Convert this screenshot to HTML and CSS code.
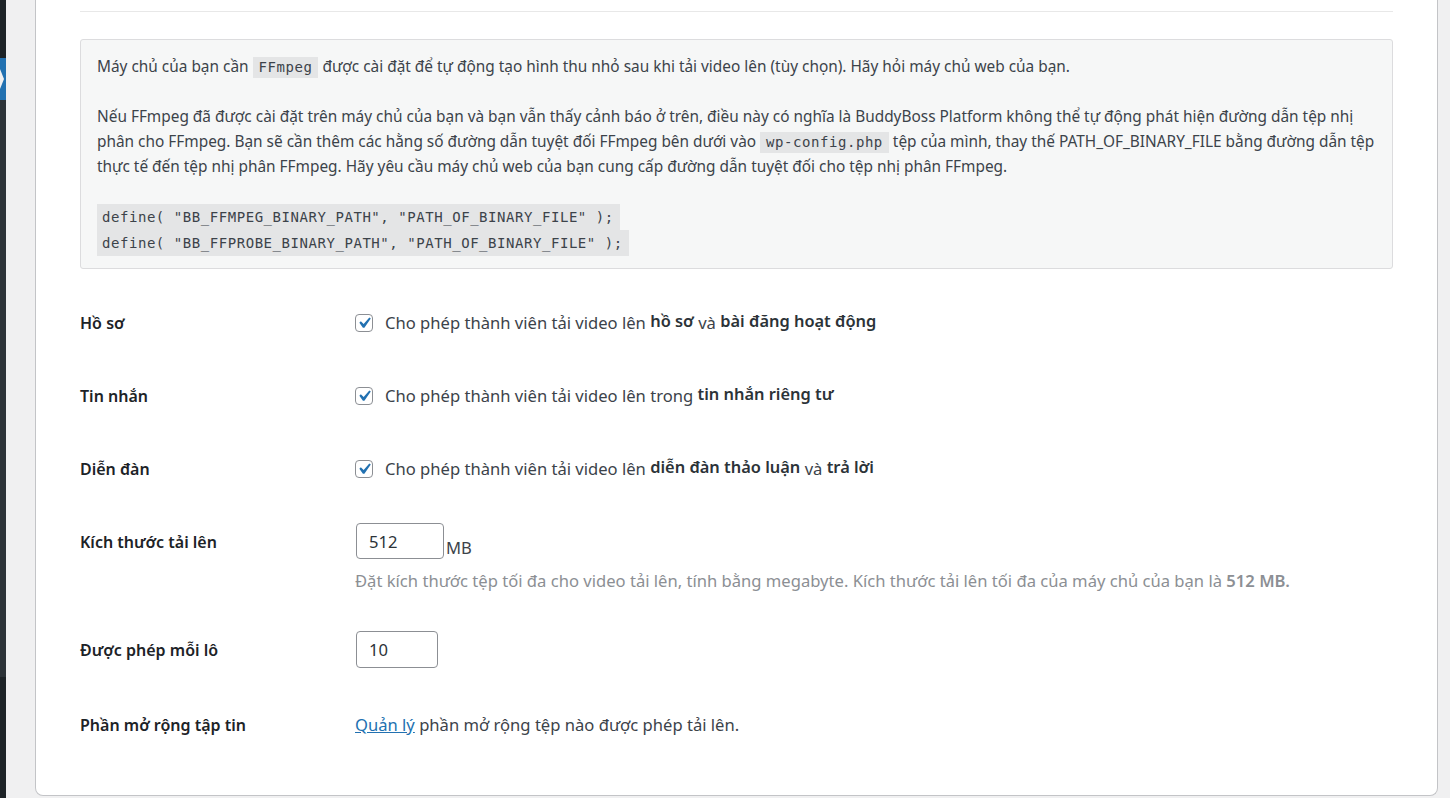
FILE: index.html
```html
<!DOCTYPE html>
<html lang="vi">
<head>
    <meta charset="utf-8">
    <title>Cài đặt video</title>
    <link rel="stylesheet" href="styles.css">
</head>
<body>
<div class="adminmenu">
    <div class="menu-top"></div>
    <div class="menu-current"><span class="notch"></span></div>
    <div class="menu-sub"></div>
    <div class="menu-bottom"></div>
</div>

<div class="wpbody">
  <div class="card">
    <hr class="sep">

    <!-- thông báo ffmpeg -->
    <div class="notice">
        <p>Máy chủ của bạn cần <code>FFmpeg</code> được cài đặt để tự động tạo hình thu nhỏ sau khi tải video lên (tùy chọn). Hãy hỏi máy chủ web của bạn.</p>
        <p>Nếu FFmpeg đã được cài đặt trên máy chủ của bạn và bạn vẫn thấy cảnh báo ở trên, điều này có nghĩa là BuddyBoss Platform không thể tự động phát hiện đường dẫn tệp nhị phân cho FFmpeg. Bạn sẽ cần thêm các hằng số đường dẫn tuyệt đối FFmpeg bên dưới vào <code>wp-config.php</code> tệp của mình, thay thế PATH_OF_BINARY_FILE bằng đường dẫn tệp thực tế đến tệp nhị phân FFmpeg. Hãy yêu cầu máy chủ web của bạn cung cấp đường dẫn tuyệt đối cho tệp nhị phân FFmpeg.</p>
        <p class="defines"><code>define( "BB_FFMPEG_BINARY_PATH", "PATH_OF_BINARY_FILE" );</code><br><code>define( "BB_FFPROBE_BINARY_PATH", "PATH_OF_BINARY_FILE" );</code></p>
    </div>

    <!-- các tùy chọn -->
    <div class="form-table">
        <div class="row">
            <div class="label">Hồ sơ</div>
            <div class="field check">
                <span class="checkbox"><svg viewBox="0 0 20 20"><path d="M14.83 4.89l1.34.94-5.81 8.38H9.02L5.78 9.67l1.34-1.25 2.57 2.4z" fill="#2271b1"/></svg></span>Cho phép thành viên tải video lên <strong>hồ sơ</strong> và <strong>bài đăng hoạt động</strong>
            </div>
        </div>
        <div class="row">
            <div class="label">Tin nhắn</div>
            <div class="field check">
                <span class="checkbox"><svg viewBox="0 0 20 20"><path d="M14.83 4.89l1.34.94-5.81 8.38H9.02L5.78 9.67l1.34-1.25 2.57 2.4z" fill="#2271b1"/></svg></span>Cho phép thành viên tải video lên trong <strong>tin nhắn riêng tư</strong>
            </div>
        </div>
        <div class="row">
            <div class="label">Diễn đàn</div>
            <div class="field check">
                <span class="checkbox"><svg viewBox="0 0 20 20"><path d="M14.83 4.89l1.34.94-5.81 8.38H9.02L5.78 9.67l1.34-1.25 2.57 2.4z" fill="#2271b1"/></svg></span>Cho phép thành viên tải video lên <strong>diễn đàn thảo luận</strong> và <strong>trả lời</strong>
            </div>
        </div>
        <div class="row">
            <div class="label">Kích thước tải lên</div>
            <div class="field">
                <div class="size-line"><input type="text" class="num wide" value="512"><span class="unit">MB</span></div>
                <p class="description">Đặt kích thước tệp tối đa cho video tải lên, tính bằng megabyte. Kích thước tải lên tối đa của máy chủ của bạn là <strong>512 MB.</strong></p>
            </div>
        </div>
        <div class="row">
            <div class="label">Được phép mỗi lô</div>
            <div class="field">
                <input type="text" class="num" value="10">
            </div>
        </div>
        <div class="row">
            <div class="label">Phần mở rộng tập tin</div>
            <div class="field text">
                <a href="#">Quản lý</a> phần mở rộng tệp nào được phép tải lên.
            </div>
        </div>
    </div>
  </div>
</div>
</body>
</html>
```

FILE: styles.css
```css
html, body {
    margin: 0;
    height: 100%;
}
body {
    display: flex;
    background: #f0f0f1;
    font-family: "Noto Sans", "Open Sans", sans-serif;
    color: #3c434a;
    overflow: hidden;
}

/* thanh menu bên trái */
.adminmenu {
    width: 6px;
    display: flex;
    flex-direction: column;
    flex-shrink: 0;
}
.menu-top { height: 58px; background: #1d2327; }
.menu-current {
    height: 42px;
    background: #2271b1;
    display: flex;
    align-items: center;
}
.notch {
    width: 0;
    height: 0;
    border-top: 10px solid transparent;
    border-bottom: 10px solid transparent;
    border-left: 4px solid #f0f0f1;
}
.menu-sub { height: 577px; background: #2c3338; }
.menu-bottom { flex: 1; background: #1d2327; }

/* vùng nội dung */
.wpbody {
    flex: 1;
    padding: 0 12px 2px 29px;
    display: flex;
}
.card {
    flex: 1;
    background: #fff;
    border: 1px solid #c3c4c7;
    border-top: none;
    border-radius: 0 0 8px 8px;
    padding: 0 44px;
}
.sep {
    border: none;
    border-top: 1px solid #e8e8e8;
    margin: 11px 0 0;
}

/* thông báo */
.notice {
    margin-top: 27px;
    background: #f6f7f7;
    border: 1px solid #dcdcde;
    border-radius: 3px;
    padding: 14px 16px 12px;
    font-size: 15.4px;
    line-height: 25px;
}
.notice p {
    margin: 0 0 25px;
}
.notice p.defines {
    margin: 0;
    line-height: 26px;
}
.notice code {
    font-family: "DejaVu Sans Mono", monospace;
    font-size: 14px;
    line-height: 18px;
    letter-spacing: 0.55px;
    background: #e4e5e6;
    color: #3c434a;
    padding: 2px 6px 3px;
}
.defines code {
    padding: 5px 6px 5px 5px;
}

/* bảng tùy chọn */
.form-table {
    margin-top: 24px;
}
.row {
    display: grid;
    grid-template-columns: 275px 1fr;
    padding: 11px 0 27px;
}
.label {
    padding-top: 7px;
    font-weight: 600;
    font-size: 16px;
    line-height: 24px;
    color: #1d2327;
}
.field {
    font-size: 16.6px;
    line-height: 24px;
}
.field.check {
    padding: 7px 0 4px;
    white-space: nowrap;
}
.field.text {
    padding-top: 7px;
}
.field strong {
    font-weight: 600;
    font-size: 16.4px;
    color: #2c3338;
    position: relative;
    top: -2px;
}
.checkbox {
    display: inline-block;
    vertical-align: -3px;
    width: 18px;
    height: 18px;
    box-sizing: border-box;
    border: 1px solid #8c8f94;
    border-radius: 4px;
    background: #fff;
    margin: 0 12px 0 0;
    position: relative;
}
.checkbox svg {
    position: absolute;
    left: -3px;
    top: -3px;
    width: 22px;
    height: 22px;
}
.size-line {
    display: flex;
    align-items: flex-end;
}
.num {
    box-sizing: border-box;
    width: 82px;
    height: 37px;
    margin: 0 0 0 1px;
    border: 1px solid #8c8f94;
    border-radius: 4px;
    padding: 0 12px;
    font-family: inherit;
    font-size: 16.6px;
    color: #2c3338;
    background: #fff;
}
.num.wide {
    width: 88px;
    height: 36px;
}
.unit {
    padding-left: 2px;
    line-height: 22px;
}
.description {
    margin: 10px 0 0;
    color: #8c8f94;
}
.description strong {
    top: 0;
    font-size: 16.6px;
    color: #8c8f94;
}
a {
    color: #2271b1;
}
```
